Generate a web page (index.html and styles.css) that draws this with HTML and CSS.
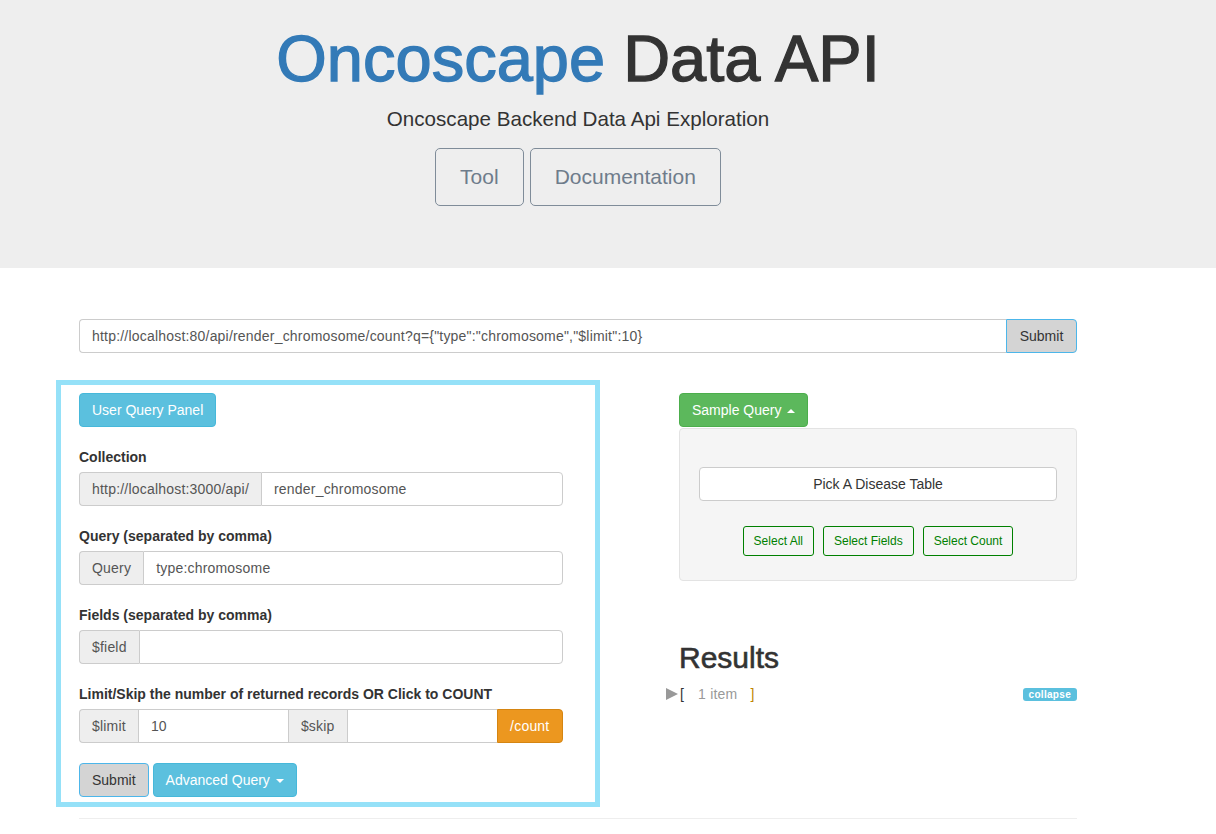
FILE: index.html
```html
<!DOCTYPE html>
<html>
<head>
<meta charset="utf-8">
<title>Oncoscape Data API</title>
<link rel="stylesheet" href="styles.css">
</head>
<body>
<header class="jumbotron">
  <div class="container jumbo-inner">
    <h1 class="title"><span class="brand">Oncoscape</span> Data API</h1>
    <p class="lead">Oncoscape Backend Data Api Exploration</p>
    <div class="nav-btns">
      <a class="btn-outline">Tool</a>
      <a class="btn-outline">Documentation</a>
    </div>
  </div>
</header>

<main class="container">
  <div class="url-row">
    <div class="url-input">http://localhost:80/api/render_chromosome/count?q={"type":"chromosome","$limit":10}</div>
    <button class="btn btn-grey url-submit">Submit</button>
  </div>

  <div class="columns">
    <section class="panel">
      <button class="btn btn-info">User Query Panel</button>

      <div class="form-group first">
        <label class="label">Collection</label>
        <div class="input-group">
          <span class="addon">http://localhost:3000/api/</span>
          <span class="field">render_chromosome</span>
        </div>
      </div>

      <div class="form-group">
        <label class="label">Query (separated by comma)</label>
        <div class="input-group">
          <span class="addon">Query</span>
          <span class="field">type:chromosome</span>
        </div>
      </div>

      <div class="form-group">
        <label class="label">Fields (separated by comma)</label>
        <div class="input-group">
          <span class="addon">$field</span>
          <span class="field"></span>
        </div>
      </div>

      <div class="form-group">
        <label class="label">Limit/Skip the number of returned records OR Click to COUNT</label>
        <div class="input-group">
          <span class="addon">$limit</span>
          <span class="field half">10</span>
          <span class="addon mid">$skip</span>
          <span class="field half"></span>
          <span class="count-btn">/count</span>
        </div>
      </div>

      <div class="actions">
        <button class="btn btn-grey">Submit</button>
        <button class="btn btn-info">Advanced Query <span class="caret"></span></button>
      </div>
    </section>

    <section class="right">
      <button class="btn btn-success dropup">Sample Query <span class="caret up"></span></button>
      <div class="well">
        <button class="btn btn-white">Pick A Disease Table</button>
        <div class="sample-btns">
          <button class="btn-sm">Select All</button>
          <button class="btn-sm">Select Fields</button>
          <button class="btn-sm">Select Count</button>
        </div>
      </div>

      <h2 class="results-title">Results</h2>
      <div class="tree">
        <span class="tri"></span>
        <span class="bracket">[</span>
        <span class="count">1 item</span>
        <span class="bracket close">]</span>
        <span class="badge">collapse</span>
      </div>
    </section>
  </div>
  <hr class="rule">
</main>
</body>
</html>
```

FILE: styles.css
```css
* { box-sizing: border-box; }
html, body {
  margin: 0;
  padding: 0;
  background: #fff;
  font-family: "Liberation Sans", Arial, Helvetica, sans-serif;
  font-size: 14px;
  letter-spacing: 0.2px;
  color: #333;
}
.container {
  width: 998px;
  margin-left: 79px;
}
.jumbotron {
  background: #eeeeee;
  height: 268px;
  padding-top: 24px;
}
.jumbo-inner {
  text-align: center;
}
.title {
  margin: 0 0 9px;
  font-size: 65px;
  line-height: 70px;
  font-weight: normal;
  letter-spacing: 0;
  color: #333;
  -webkit-text-stroke: 1.3px currentColor;
}
.brand { color: #337ab7; }
.lead {
  margin: 0;
  font-size: 20.6px;
  line-height: 29px;
  letter-spacing: 0;
  color: #333;
  padding-top: 1px;
}
.nav-btns {
  margin-top: 15px;
  display: flex;
  justify-content: center;
  gap: 6px;
}
.btn-outline {
  display: inline-flex;
  align-items: center;
  height: 58px;
  padding: 0 24px;
  font-size: 21px;
  letter-spacing: 0;
  color: #6e7c8b;
  border: 1px solid #7f8c99;
  border-radius: 5px;
  background: transparent;
}
.url-row {
  margin-top: 51px;
  display: flex;
  height: 34px;
}
.url-input {
  flex: 1;
  height: 34px;
  border: 1px solid #ccc;
  border-right: none;
  border-radius: 4px 0 0 4px;
  padding: 0 12px;
  line-height: 32px;
  color: #555;
  font-size: 14px;
  white-space: nowrap;
  overflow: hidden;
}
.btn {
  font-family: inherit;
  font-size: 14px;
  letter-spacing: 0;
  height: 34px;
  padding: 0 12px;
  border: 1px solid transparent;
  border-radius: 4px;
  line-height: 32px;
  cursor: pointer;
}
.btn-grey {
  background: #d4d4d4;
  border-color: #4cb6ea;
  color: #333;
}
.url-submit {
  width: 71px;
  border-radius: 0 4px 4px 0;
}
.btn-info {
  background: #5bc0de;
  border-color: #46b8da;
  color: #fff;
}
.btn-success {
  background: #5cb85c;
  border-color: #4cae4c;
  color: #fff;
}
.columns {
  display: flex;
  margin-top: 27px;
}
.panel {
  width: 544px;
  margin-left: -23px;
  border: 5px solid #95e1f8;
  padding: 8px 32px 5px 18px;
}
.form-group { margin-top: 20px; }
.label {
  display: block;
  font-weight: bold;
  font-size: 14px;
  letter-spacing: 0;
  line-height: 20px;
  margin-bottom: 5px;
}
.input-group {
  display: flex;
  height: 34px;
}
.addon {
  background: #eee;
  border: 1px solid #ccc;
  color: #555;
  padding: 0 12px;
  line-height: 32px;
  white-space: nowrap;
}
.input-group > .addon:first-child {
  border-radius: 4px 0 0 4px;
  border-right: none;
}
.addon.mid { border-right: none; }
.field {
  flex: 1;
  border: 1px solid #ccc;
  border-radius: 0 4px 4px 0;
  padding: 0 12px;
  line-height: 32px;
  color: #555;
}
.field.half {
  flex: 0 0 150px;
  border-radius: 0;
  border-right: none;
}
.count-btn {
  flex: 1;
  background: #ec971f;
  border: 1px solid #d58512;
  border-radius: 0 4px 4px 0;
  color: #fff;
  text-align: center;
  line-height: 32px;
}
.actions {
  margin-top: 20px;
  display: flex;
  gap: 4px;
}
.caret {
  display: inline-block;
  width: 0;
  height: 0;
  margin-left: 2px;
  vertical-align: middle;
  border-top: 4px solid #fff;
  border-left: 4px solid transparent;
  border-right: 4px solid transparent;
}
.caret.up {
  border-top: none;
  border-bottom: 4px solid #fff;
}
.right {
  margin-left: 79px;
  flex: 1;
  padding-top: 13px;
}
.well {
  margin-top: 1px;
  background: #f5f5f5;
  border: 1px solid #e3e3e3;
  border-radius: 4px;
  padding: 38px 19px 24px;
}
.btn-white {
  display: block;
  width: 100%;
  background: #fff;
  border-color: #ccc;
  color: #333;
  text-align: center;
}
.sample-btns {
  margin-top: 25px;
  display: flex;
  justify-content: center;
  gap: 9px;
}
.btn-sm {
  font-family: inherit;
  font-size: 12px;
  height: 30px;
  padding: 0 10px;
  background: transparent;
  border: 1px solid #008000;
  border-radius: 3px;
  color: #008000;
}
.results-title {
  margin: 60px 0 0;
  font-size: 30px;
  line-height: 33px;
  font-weight: normal;
  letter-spacing: 0;
  color: #333;
  -webkit-text-stroke: 0.6px #333;
}
.tree {
  margin-top: 10px;
  display: flex;
  align-items: center;
  height: 20px;
  margin-left: -13px;
}
.tri {
  width: 0;
  height: 0;
  border-left: 12px solid #999;
  border-top: 6px solid transparent;
  border-bottom: 6px solid transparent;
}
.bracket {
  color: #333;
  margin-left: 2px;
}
.count {
  color: #999;
  margin-left: 14px;
}
.bracket.close {
  color: #c18401;
  margin-left: 13px;
}
.badge {
  margin-left: auto;
  background: #5bc0de;
  color: #fff;
  font-weight: bold;
  font-size: 10px;
  letter-spacing: 0.3px;
  line-height: 13px;
  padding: 0 6px;
  border-radius: 3px;
}
.rule {
  margin: 11px 0 0;
  border: 0;
  border-top: 1px solid #eee;
}
```
